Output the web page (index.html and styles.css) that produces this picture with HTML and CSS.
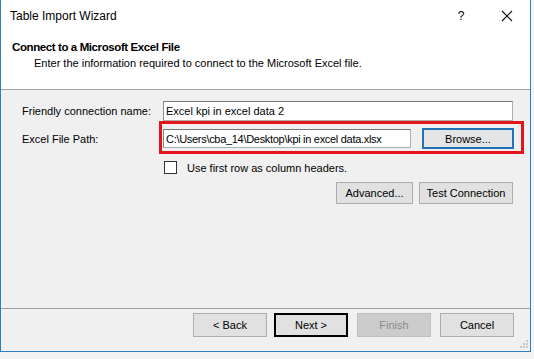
FILE: index.html
```html
<!DOCTYPE html>
<html>
<head>
<meta charset="utf-8">
<link rel="stylesheet" href="styles.css">
</head>
<body>
<div class="window">
  <div class="titlebar">
    <span class="title">Table Import Wizard</span>
    <span class="help">?</span>
    <span class="close">
      <svg width="12" height="12" viewBox="0 0 12 12"><path d="M1 1 L11 11 M11 1 L1 11" stroke="#111" stroke-width="1.1" fill="none"/></svg>
    </span>
  </div>
  <div class="header">
    <div class="h-title">Connect to a Microsoft Excel File</div>
    <div class="h-sub">Enter the information required to connect to the Microsoft Excel file.</div>
  </div>
  <div class="content">
    <div class="row row1">
      <label class="lbl">Friendly connection name:</label>
      <div class="input wide">Excel kpi in excel data 2</div>
    </div>
    <div class="row row2">
      <label class="lbl">Excel File Path:</label>
      <div class="input path">C:\Users\cba_14\Desktop\kpi in excel data.xlsx</div>
      <div class="btn browse">Browse...</div>
      <div class="highlight"></div>
    </div>
    <div class="row row3">
      <span class="check"></span>
      <span class="check-lbl">Use first row as column headers.</span>
    </div>
    <div class="row row4">
      <div class="btn adv">Advanced...</div>
      <div class="btn test">Test Connection</div>
    </div>
  </div>
  <div class="footer">
    <div class="btn nav back">&lt; Back</div>
    <div class="btn nav next">Next &gt;</div>
    <div class="btn nav disabled">Finish</div>
    <div class="btn nav">Cancel</div>
    <svg class="grip" width="10" height="10" viewBox="0 0 10 10">
      <rect x="7" y="1" width="2" height="2" fill="#c8c8c8"/>
      <rect x="4" y="4" width="2" height="2" fill="#c8c8c8"/>
      <rect x="7" y="4" width="2" height="2" fill="#c8c8c8"/>
      <rect x="1" y="7" width="2" height="2" fill="#c8c8c8"/>
      <rect x="4" y="7" width="2" height="2" fill="#c8c8c8"/>
      <rect x="7" y="7" width="2" height="2" fill="#c8c8c8"/>
    </svg>
  </div>
</div>
<div class="below"></div>
</body>
</html>
```
FILE: styles.css
```css
html, body {
  margin: 0;
  padding: 0;
  background: #f4f4f4;
  font-family: "Liberation Sans", Arial, sans-serif;
  font-size: 11px;
  color: #000;
}
.window {
  width: 529px;
  height: 351px;
  border-left: 1px solid #2d7fc1;
  border-right: 1px solid #2d7fc1;
  border-bottom: 1px solid #2d7fc1;
  background: #f0f0f0;
  display: flex;
  flex-direction: column;
  position: relative;
}
.titlebar {
  height: 32px;
  background: #fff;
  display: flex;
  align-items: center;
  padding-left: 9px;
}
.title {
  font-size: 12px;
  flex: 1;
  padding-bottom: 1px;
}
.help {
  font-size: 12px;
  width: 46px;
  text-align: center;
  padding-left: 4px;
  padding-bottom: 1px;
}
.close {
  width: 46px;
  height: 32px;
  display: flex;
  align-items: center;
  justify-content: center;
}
.header {
  height: 58px;
  background: #fff;
  border-bottom: 1px solid #a0a0a0;
  padding-left: 11px;
  box-sizing: border-box;
  padding-top: 8px;
}
.h-title {
  font-weight: bold;
  font-size: 11.5px;
  letter-spacing: -0.4px;
  line-height: 14px;
}
.h-sub {
  padding-left: 22px;
  line-height: 14px;
  margin-top: 2px;
}
.content {
  flex: 1;
  padding: 11px 0 0 21px;
  box-sizing: border-box;
  position: relative;
}
.row {
  display: flex;
  align-items: center;
  position: relative;
}
.lbl {
  width: 141px;
}
.input {
  background: #fff;
  border: 1px solid #abadb3;
  border-top-color: #767676;
  border-left-color: #8a8a8a;
  box-sizing: border-box;
  padding: 0 3px 0 2px;
  display: flex;
  align-items: center;
  white-space: nowrap;
  overflow: hidden;
}
.wide {
  width: 350px;
  height: 20px;
}
.row2 {
  margin-top: 7px;
}
.path {
  width: 248px;
  height: 19px;
  letter-spacing: -0.3px;
}
.btn {
  background: #e1e1e1;
  border: 1px solid #adadad;
  box-sizing: border-box;
  display: flex;
  align-items: center;
  justify-content: center;
  white-space: nowrap;
}
.browse {
  width: 92px;
  height: 21px;
  margin-left: 11px;
  border: 2px solid #1f73b6;
  background: #e5e5e5;
}
.highlight {
  position: absolute;
  left: 137px;
  top: -7px;
  width: 365px;
  height: 33px;
  border: 3px solid #e3141a;
  box-sizing: border-box;
  pointer-events: none;
}
.row3 {
  margin-top: 12px;
  padding-left: 142px;
}
.check {
  width: 13px;
  height: 13px;
  border: 1px solid #333;
  background: #fff;
  box-sizing: border-box;
}
.check-lbl {
  margin-left: 10px;
}
.row4 {
  margin-top: 8px;
  justify-content: flex-end;
  padding-right: 17px;
  gap: 6px;
}
.adv {
  width: 77px;
  height: 22px;
}
.test {
  width: 94px;
  height: 22px;
}
.footer {
  height: 43px;
  border-top: 1px solid #a0a0a0;
  box-sizing: border-box;
  display: flex;
  justify-content: flex-end;
  align-items: flex-start;
  padding: 4px 16px 0 0;
  gap: 9px;
  position: relative;
}
.nav {
  width: 74px;
  height: 24px;
}
.back {
  margin-right: -2px;
}
.next {
  border: 2px solid #000;
}
.disabled {
  background: #cccccc;
  border-color: #bfbfbf;
  color: #8a8a8a;
}
.grip {
  position: absolute;
  right: 1px;
  bottom: 2px;
}
.below {
  height: 7px;
}
```
